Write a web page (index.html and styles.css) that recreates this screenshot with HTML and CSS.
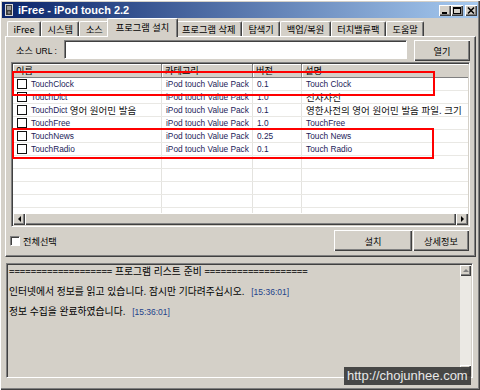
FILE: index.html
```html
<!DOCTYPE html>
<html lang="ko">
<head>
    <meta charset="UTF-8">
    <title>iFree - iPod touch 2.2</title>
    <link rel="stylesheet" href="styles.css">
</head>
<body>
    <div class="window">
        <div class="titlebar">
            <svg class="app-icon" width="8" height="12" viewBox="0 0 8 12">
                <rect x="0" y="0" width="8" height="12" fill="#d8d8d8"/>
                <rect x="1" y="1" width="6" height="10" fill="#3c3c3c"/>
                <rect x="2" y="2" width="4" height="4" fill="#9a9a9a"/>
                <circle cx="4" cy="8.5" r="1.3" fill="#8a8a8a"/>
            </svg>
            <span class="title">iFree - iPod touch 2.2</span>
            <div class="title-buttons">
                <span class="tbtn">
                    <svg width="10" height="9" viewBox="0 0 10 9"><rect x="2" y="6" width="5" height="2" fill="#000"/></svg>
                </span>
                <span class="tbtn">
                    <svg width="10" height="9" viewBox="0 0 10 9"><rect x="1.5" y="1.5" width="7" height="6" fill="none" stroke="#000"/><rect x="1" y="1" width="8" height="2" fill="#000"/></svg>
                </span>
                <span class="tbtn close">
                    <svg width="10" height="9" viewBox="0 0 10 9"><path d="M2 1.5 L8 7.5 M8 1.5 L2 7.5" stroke="#000" stroke-width="1.6"/></svg>
                </span>
            </div>
        </div>

        <div class="tabs">
            <span class="tab">iFree</span>
            <span class="tab">시스템</span>
            <span class="tab">소스</span>
            <span class="tab active">프로그램 설치</span>
            <span class="tab">프로그램 삭제</span>
            <span class="tab">탐색기</span>
            <span class="tab">백업/복원</span>
            <span class="tab">터치밸류팩</span>
            <span class="tab">도움말</span>
        </div>

        <div class="panel">
            <div class="url-row">
                <span class="url-label">소스 <span class="en">URL :</span></span>
                <div class="url-input"></div>
                <div class="btn open-btn">열기</div>
            </div>

            <div class="list">
                <div class="list-head">
                    <div class="head-cell">이름</div>
                    <div class="head-cell">카테고리</div>
                    <div class="head-cell">버전</div>
                    <div class="head-cell last">설명</div>
                </div>
                <div class="list-body">
                    <div class="row">
                        <div class="cell first"><span class="check"></span>TouchClock</div>
                        <div class="cell">iPod touch Value Pack</div>
                        <div class="cell">0.1</div>
                        <div class="cell last">Touch Clock</div>
                    </div>
                    <div class="row">
                        <div class="cell first"><span class="check"></span>TouchDict</div>
                        <div class="cell">iPod touch Value Pack</div>
                        <div class="cell">1.0</div>
                        <div class="cell last"><span class="ko">전자사전</span></div>
                    </div>
                    <div class="row">
                        <div class="cell first"><span class="check"></span>TouchDict&nbsp;<span class="ko">영어 원어민 발음</span></div>
                        <div class="cell">iPod touch Value Pack</div>
                        <div class="cell">0.1</div>
                        <div class="cell last"><span class="ko">영한사전의 영어 원어민 발음 파일. 크기</span></div>
                    </div>
                    <div class="row">
                        <div class="cell first"><span class="check"></span>TouchFree</div>
                        <div class="cell">iPod touch Value Pack</div>
                        <div class="cell">1.0</div>
                        <div class="cell last">TouchFree</div>
                    </div>
                    <div class="row">
                        <div class="cell first"><span class="check"></span>TouchNews</div>
                        <div class="cell">iPod touch Value Pack</div>
                        <div class="cell">0.25</div>
                        <div class="cell last">Touch News</div>
                    </div>
                    <div class="row">
                        <div class="cell first"><span class="check"></span>TouchRadio</div>
                        <div class="cell">iPod touch Value Pack</div>
                        <div class="cell">0.1</div>
                        <div class="cell last">Touch Radio</div>
                    </div>
                    <div class="row"><div class="cell"></div><div class="cell"></div><div class="cell"></div><div class="cell last"></div></div>
                    <div class="row"><div class="cell"></div><div class="cell"></div><div class="cell"></div><div class="cell last"></div></div>
                    <div class="row"><div class="cell"></div><div class="cell"></div><div class="cell"></div><div class="cell last"></div></div>
                    <div class="row"><div class="cell"></div><div class="cell"></div><div class="cell"></div><div class="cell last"></div></div>
                    <div class="row"><div class="cell"></div><div class="cell"></div><div class="cell"></div><div class="cell last"></div></div>
                </div>
                <div class="hscroll">
                    <span class="sbtn"><span class="arrow-left"></span></span>
                    <span class="thumb"></span>
                    <span class="sbtn"><span class="arrow-right"></span></span>
                </div>
            </div>

            <div class="bottom-row">
                <span class="box-check"></span>
                <span class="select-all">전체선택</span>
                <div class="btn install-btn">설치</div>
                <div class="btn info-btn">상세정보</div>
            </div>
        </div>

        <div class="log">
            <div class="log-text">
                <div class="log-line">=================== 프로그램 리스트 준비 ===================</div>
                <div class="log-line">인터넷에서 정보를 읽고 있습니다. 잠시만 기다려주십시오. <span class="time">[15:36:01]</span></div>
                <div class="log-line">정보 수집을 완료하였습니다. <span class="time">[15:36:01]</span></div>
            </div>
            <div class="vscroll">
                <span class="sbtn small"><span class="arrow-up"></span></span>
                <span class="track"></span>
                <span class="sbtn small"><span class="arrow-down"></span></span>
            </div>
        </div>

        <!-- red annotation boxes -->
        <div class="mark mark-one"></div>
        <div class="mark mark-two"></div>

        <div class="watermark">http://chojunhee.com</div>
    </div>
</body>
</html>
```

FILE: styles.css
```css
* {
    box-sizing: border-box;
}
body {
    margin: 0;
    background-color: #d4d0c8;
    font-family: "Noto Sans CJK KR", sans-serif;
    font-size: 9.2px;
    color: #000;
}
.window {
    position: relative;
    width: 480px;
    height: 390px;
    padding: 2px;
    background-color: #d4d0c8;
    box-shadow: inset 1px 1px #fff, inset -1px -1px #404040, inset -2px -2px #808080;
    overflow: hidden;
}
.titlebar {
    display: flex;
    align-items: center;
    height: 16px;
    padding: 0 1px 0 3px;
    background: linear-gradient(to right, #0a246a, #a6caf0);
}
.app-icon {
    margin-right: 5px;
}
.title {
    font-family: "Liberation Sans", sans-serif;
    font-weight: bold;
    font-size: 11px;
    color: #fff;
}
.title-buttons {
    display: flex;
    margin-left: auto;
}
.tbtn {
    display: flex;
    align-items: center;
    justify-content: center;
    width: 12px;
    height: 11px;
    background-color: #d4d0c8;
    box-shadow: inset 1px 1px #fff, inset -1px -1px #404040, inset -2px -2px #808080;
}
.tbtn.close {
    margin-left: 2px;
}
.tabs {
    display: flex;
    align-items: flex-end;
    height: 18px;
    margin-left: 3px;
    padding-left: 2px;
}
.tab {
    height: 15px;
    padding: 0 5.5px;
    line-height: 14px;
    border-top: 1px solid #fff;
    border-left: 1px solid #fff;
    border-right: 1px solid #404040;
    box-shadow: inset -1px 0 #808080;
    border-radius: 2px 2px 0 0;
    white-space: nowrap;
}
.tab.active {
    position: relative;
    z-index: 1;
    height: 19px;
    margin: 0 -2px -1px;
    padding: 0 7.5px;
    line-height: 16px;
    background-color: #d4d0c8;
}
.panel {
    height: 221px;
    margin: 0 2px 0 3px;
    padding: 3px 5px 5px 5px;
    border-top: 1px solid #fff;
    border-left: 1px solid #fff;
    border-right: 1px solid #404040;
    border-bottom: 1px solid #404040;
    box-shadow: inset -1px -1px #808080;
}
.url-row {
    display: flex;
    align-items: flex-start;
    height: 22px;
}
.url-label {
    width: 48px;
    margin-left: 5px;
    padding-top: 3px;
    white-space: nowrap;
}
.en {
    font-family: "Liberation Sans", sans-serif;
    font-size: 8.5px;
}
.url-input {
    width: 343px;
    height: 19px;
    background-color: #fff;
    border-top: 1px solid #808080;
    border-left: 1px solid #808080;
    border-right: 1px solid #fff;
    border-bottom: 1px solid #fff;
    box-shadow: inset 1px 1px #404040;
}
.btn {
    display: flex;
    align-items: center;
    justify-content: center;
    height: 21px;
    background-color: #d4d0c8;
    box-shadow: inset 1px 1px #fff, inset -1px -1px #404040, inset -2px -2px #808080;
}
.open-btn {
    width: 56px;
    margin-left: 7px;
}
.list {
    height: 165px;
    border-top: 1px solid #808080;
    border-left: 1px solid #808080;
    border-right: 1px solid #fff;
    border-bottom: 1px solid #fff;
    box-shadow: inset 1px 1px #404040, inset -1px -1px #d4d0c8;
    padding: 1px;
    display: flex;
    flex-direction: column;
}
.list-head,
.row {
    display: grid;
    grid-template-columns: 149px 91px 49px 166px;
}
.list-head {
    height: 14px;
    line-height: 12px;
    background-color: #d4d0c8;
    border-bottom: 1px solid #808080;
}
.head-cell {
    padding-left: 3px;
    border-right: 1px solid #808080;
    box-shadow: inset 1px 1px #fff;
}
.head-cell.last {
    border-right: none;
}
.list-body {
    height: 135px;
    overflow: hidden;
    background-color: #fff;
}
.row {
    height: 13px;
    line-height: 12px;
    border-bottom: 1px solid #e9e8e4;
    color: #1c1c58;
    font-family: "Liberation Sans", "Noto Sans CJK KR", sans-serif;
    font-size: 8.3px;
}
.ko {
    font-family: "Noto Sans CJK KR", sans-serif;
    font-size: 9.5px;
    line-height: 12px;
    color: #111;
}
.cell {
    padding-left: 4px;
    white-space: nowrap;
    overflow: hidden;
    border-right: 1px solid #e4e3df;
}
.cell.last {
    border-right: none;
}
.cell.first {
    display: flex;
    align-items: center;
}
.check {
    width: 10px;
    height: 10px;
    margin-right: 4px;
    border: 1px solid #111;
    background-color: #fff;
    flex-shrink: 0;
}
.hscroll {
    display: flex;
    height: 12px;
    background-color: #e6e4de;
}
.sbtn {
    display: flex;
    align-items: center;
    justify-content: center;
    width: 12px;
    height: 12px;
    flex-shrink: 0;
    background-color: #d4d0c8;
    box-shadow: inset 1px 1px #fff, inset -1px -1px #404040, inset -2px -2px #808080;
}
.sbtn.small {
    width: 11px;
    height: 11px;
}
.thumb {
    flex: 1;
    background-color: #d4d0c8;
    box-shadow: inset 1px 1px #fff, inset -1px -1px #404040, inset -2px -2px #808080;
}
.arrow-left,
.arrow-right,
.arrow-up,
.arrow-down {
    width: 0;
    height: 0;
}
.arrow-left {
    border-right: 3px solid #000;
    border-top: 3px solid transparent;
    border-bottom: 3px solid transparent;
}
.arrow-right {
    border-left: 3px solid #000;
    border-top: 3px solid transparent;
    border-bottom: 3px solid transparent;
}
.arrow-up {
    border-bottom: 3px solid #808080;
    border-left: 3px solid transparent;
    border-right: 3px solid transparent;
}
.arrow-down {
    border-top: 3px solid #808080;
    border-left: 3px solid transparent;
    border-right: 3px solid transparent;
}
.bottom-row {
    display: flex;
    align-items: center;
    height: 21px;
    margin-top: 3px;
}
.box-check {
    width: 10px;
    height: 10px;
    margin-left: -1px;
    background-color: #fff;
    border-top: 1px solid #808080;
    border-left: 1px solid #808080;
    border-right: 1px solid #fff;
    border-bottom: 1px solid #fff;
    box-shadow: inset 1px 1px #404040;
}
.select-all {
    margin-left: 3px;
}
.install-btn {
    width: 78px;
    margin-left: auto;
}
.info-btn {
    width: 56px;
    margin-left: 1px;
    margin-right: 1px;
}
.log {
    display: flex;
    height: 115px;
    margin: 6px 5px 0 4px;
    border-top: 1px solid #808080;
    border-left: 1px solid #808080;
    border-right: 1px solid #fff;
    border-bottom: 1px solid #fff;
    box-shadow: inset 1px 1px #404040, inset -1px -1px #d4d0c8;
    padding: 1px;
}
.log-text {
    flex: 1;
    padding-left: 1px;
    white-space: nowrap;
    overflow: hidden;
    font-size: 9.8px;
}
.log-line {
    height: 20px;
    line-height: 12px;
}
.time {
    margin-left: 4px;
    font-family: "Liberation Sans", sans-serif;
    font-size: 8.5px;
    color: #23428a;
}
.vscroll {
    display: flex;
    flex-direction: column;
    width: 11px;
    background-color: #ebe9e4;
}
.track {
    flex: 1;
}
.mark {
    position: absolute;
    left: 12px;
    border: 2px solid #ff0000;
}
.mark-one {
    top: 71px;
    width: 423px;
    height: 25px;
}
.mark-two {
    top: 128px;
    width: 422px;
    height: 31px;
}
.watermark {
    position: absolute;
    left: 344px;
    top: 367px;
    height: 18px;
    padding: 0 3px;
    background-color: rgba(55, 55, 55, 0.9);
    color: #e8e8e8;
    font-family: "Liberation Sans", sans-serif;
    font-size: 13px;
    line-height: 18px;
}
```
